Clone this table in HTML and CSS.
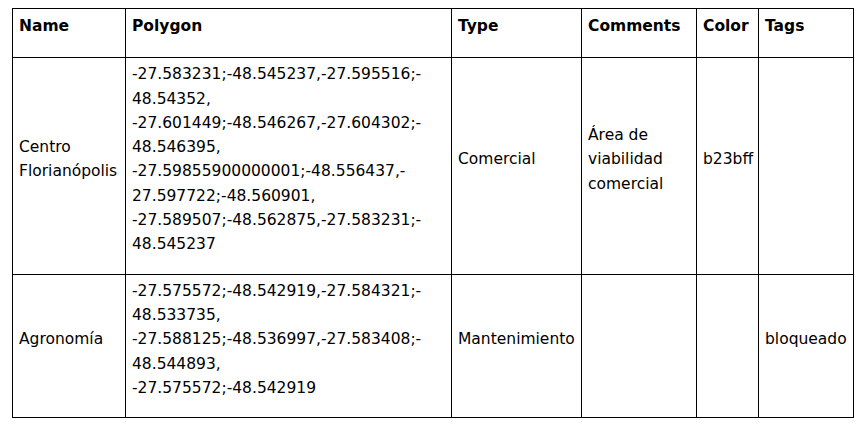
FILE: index.html
```html
<!DOCTYPE html>
<html>
<head>
<meta charset="utf-8">
<link rel="stylesheet" href="styles.css">
</head>
<body>
<table class="grid">
  <colgroup>
    <col class="c-name">
    <col class="c-poly">
    <col class="c-type">
    <col class="c-comm">
    <col class="c-color">
    <col class="c-tags">
  </colgroup>
  <thead>
    <tr>
      <th>Name</th>
      <th>Polygon</th>
      <th>Type</th>
      <th>Comments</th>
      <th>Color</th>
      <th>Tags</th>
    </tr>
  </thead>
  <tbody>
    <tr>
      <td>Centro Florianópolis</td>
      <td class="poly">-27.583231;-48.545237,-27.595516;-<br>48.54352,<br>-27.601449;-48.546267,-27.604302;-<br>48.546395,<br>-27.59855900000001;-48.556437,-<br>27.597722;-48.560901,<br>-27.589507;-48.562875,-27.583231;-<br>48.545237</td>
      <td>Comercial</td>
      <td>Área de viabilidad comercial</td>
      <td>b23bff</td>
      <td></td>
    </tr>
    <tr>
      <td>Agronomía</td>
      <td class="poly">-27.575572;-48.542919,-27.584321;-<br>48.533735,<br>-27.588125;-48.536997,-27.583408;-<br>48.544893,<br>-27.575572;-48.542919</td>
      <td>Mantenimiento</td>
      <td></td>
      <td></td>
      <td>bloqueado</td>
    </tr>
  </tbody>
</table>
</body>
</html>
```

FILE: styles.css
```css
html, body {
  background: #ffffff;
}
body {
  margin: 8px 0 0 12px;
  font-family: "DejaVu Sans", "Liberation Sans", sans-serif;
  font-size: 15.5px;
  line-height: 24.3px;
  color: #000000;
}
.grid {
  border-collapse: collapse;
  table-layout: fixed;
  width: 841px;
}
.c-name { width: 113px; }
.c-poly { width: 326px; }
.c-type { width: 130px; }
.c-comm { width: 115px; }
.c-color { width: 62px; }
.c-tags { width: 95px; }
.grid th,
.grid td {
  border: 1px solid #000000;
  padding: 4px 5px 17px 6px;
  text-align: left;
  vertical-align: middle;
  overflow: hidden;
}
.grid th {
  font-weight: bold;
  vertical-align: top;
  padding-top: 5px;
  padding-bottom: 19px;
}
.grid td.poly {
  white-space: nowrap;
}
```
